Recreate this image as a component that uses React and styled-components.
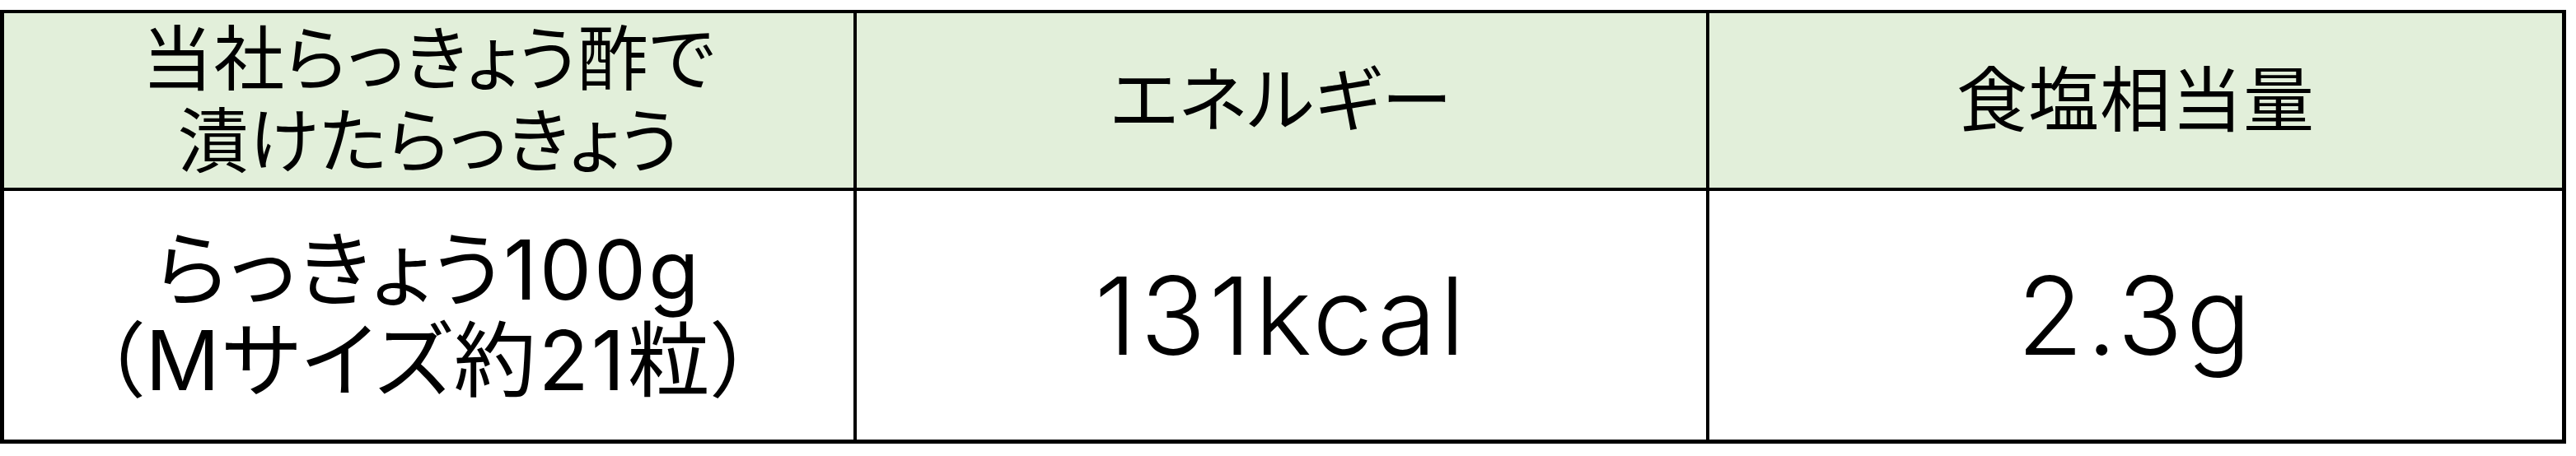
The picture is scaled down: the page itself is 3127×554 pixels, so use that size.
import styled, { createGlobalStyle } from 'styled-components';

const GlobalStyle = createGlobalStyle`
  html, body {
    margin: 0;
    padding: 0;
    background: #ffffff;
  }
  body {
    font-family: Inter, "Noto Sans CJK JP", sans-serif;
    color: #000000;
  }
`;

const Page = styled.div`
  padding-top: 12px;
`;

const Table = styled.div`
  display: grid;
  grid-template-columns: repeat(3, 1035px);
  grid-template-rows: 216px 302px;
  width: max-content;
  border: 5px solid #000000;
  border-top-width: 4px;
`;

const Cell = styled.div`
  display: flex;
  align-items: center;
  justify-content: center;
  text-align: center;
  background: ${(p) => (p.$head ? '#e2efda' : '#ffffff')};
  border-right: ${(p) => (p.$last ? 'none' : '4px solid #000000')};
  border-bottom: ${(p) => (p.$head ? '4px solid #000000' : 'none')};
  font-feature-settings: 'palt';
`;

const HeadText = styled.div`
  font-size: 86px;
  line-height: 100px;
  letter-spacing: 1px;
`;

const AmountText = styled.div`
  font-size: 100px;
  line-height: 110px;
  letter-spacing: 3px;
`;

const ValueText = styled.div`
  font-size: 131px;
  line-height: 1;
  letter-spacing: 4px;
  font-weight: 300;
`;

export default function App() {
  return (
    <Page>
      <GlobalStyle />
      <Table>
        <Cell $head>
          <HeadText>
            当社らっきょう酢で
            <br />
            漬けたらっきょう
          </HeadText>
        </Cell>
        <Cell $head>
          <HeadText>エネルギー</HeadText>
        </Cell>
        <Cell $head $last>
          <HeadText>食塩相当量</HeadText>
        </Cell>
        <Cell>
          <AmountText>
            らっきょう100g
            <br />
            （Mサイズ約21粒）
          </AmountText>
        </Cell>
        <Cell>
          <ValueText>131kcal</ValueText>
        </Cell>
        <Cell $last>
          <ValueText>2.3g</ValueText>
        </Cell>
      </Table>
    </Page>
  );
}
